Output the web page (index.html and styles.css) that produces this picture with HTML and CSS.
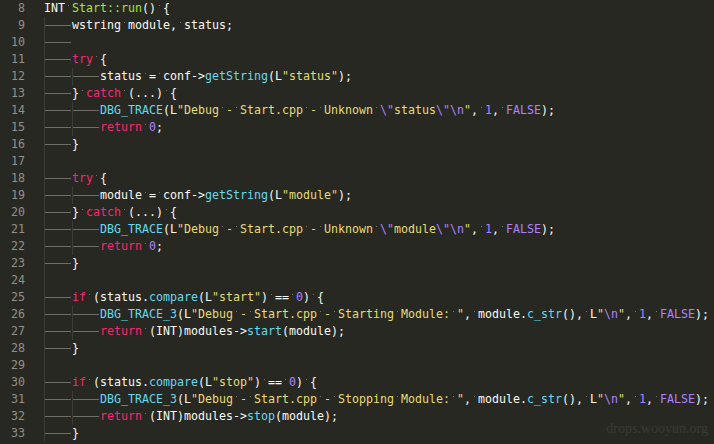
FILE: index.html
```html
<!DOCTYPE html>
<html>
<head>
<meta charset="utf-8">
<link rel="stylesheet" href="styles.css">
</head>
<body>
<div class="editor">
<div class="line"><span class="num">8</span><span class="code">INT<i class="w"> </i><span class="e">Start::run</span>()<i class="w"> </i>{</span></div>
<div class="line"><span class="num">9</span><span class="code"><i class="t"></i>wstring<i class="w"> </i>module,<i class="w"> </i>status;</span></div>
<div class="line"><span class="num">10</span><span class="code"><i class="t"></i></span></div>
<div class="line"><span class="num">11</span><span class="code"><i class="t"></i><span class="k">try</span><i class="w"> </i>{</span></div>
<div class="line"><span class="num">12</span><span class="code"><i class="t"></i><i class="t"></i>status<i class="w"> </i>=<i class="w"> </i>conf-&gt;<span class="f">getString</span>(L<span class="s">"status"</span>);</span></div>
<div class="line"><span class="num">13</span><span class="code"><i class="t"></i>}<i class="w"> </i><span class="k">catch</span><i class="w"> </i>(...)<i class="w"> </i>{</span></div>
<div class="line"><span class="num">14</span><span class="code"><i class="t"></i><i class="t"></i><span class="f">DBG_TRACE</span>(L<span class="s">"Debug<i class="w"> </i>-<i class="w"> </i>Start.cpp<i class="w"> </i>-<i class="w"> </i>Unknown<i class="w"> </i><span class="n">\"</span>status<span class="n">\"\n</span>"</span>,<i class="w"> </i><span class="n">1</span>,<i class="w"> </i><span class="n">FALSE</span>);</span></div>
<div class="line"><span class="num">15</span><span class="code"><i class="t"></i><i class="t"></i><span class="k">return</span><i class="w"> </i><span class="n">0</span>;</span></div>
<div class="line"><span class="num">16</span><span class="code"><i class="t"></i>}</span></div>
<div class="line"><span class="num">17</span><span class="code"><i class="g"></i></span></div>
<div class="line"><span class="num">18</span><span class="code"><i class="t"></i><span class="k">try</span><i class="w"> </i>{</span></div>
<div class="line"><span class="num">19</span><span class="code"><i class="t"></i><i class="t"></i>module<i class="w"> </i>=<i class="w"> </i>conf-&gt;<span class="f">getString</span>(L<span class="s">"module"</span>);</span></div>
<div class="line"><span class="num">20</span><span class="code"><i class="t"></i>}<i class="w"> </i><span class="k">catch</span><i class="w"> </i>(...)<i class="w"> </i>{</span></div>
<div class="line"><span class="num">21</span><span class="code"><i class="t"></i><i class="t"></i><span class="f">DBG_TRACE</span>(L<span class="s">"Debug<i class="w"> </i>-<i class="w"> </i>Start.cpp<i class="w"> </i>-<i class="w"> </i>Unknown<i class="w"> </i><span class="n">\"</span>module<span class="n">\"\n</span>"</span>,<i class="w"> </i><span class="n">1</span>,<i class="w"> </i><span class="n">FALSE</span>);</span></div>
<div class="line"><span class="num">22</span><span class="code"><i class="t"></i><i class="t"></i><span class="k">return</span><i class="w"> </i><span class="n">0</span>;</span></div>
<div class="line"><span class="num">23</span><span class="code"><i class="t"></i>}</span></div>
<div class="line"><span class="num">24</span><span class="code"><i class="g"></i></span></div>
<div class="line"><span class="num">25</span><span class="code"><i class="t"></i><span class="k">if</span><i class="w"> </i>(status.<span class="f">compare</span>(L<span class="s">"start"</span>)<i class="w"> </i>==<i class="w"> </i><span class="n">0</span>)<i class="w"> </i>{</span></div>
<div class="line"><span class="num">26</span><span class="code"><i class="t"></i><i class="t"></i><span class="f">DBG_TRACE_3</span>(L<span class="s">"Debug<i class="w"> </i>-<i class="w"> </i>Start.cpp<i class="w"> </i>-<i class="w"> </i>Starting<i class="w"> </i>Module:<i class="w"> </i>"</span>,<i class="w"> </i>module.<span class="f">c_str</span>(),<i class="w"> </i>L<span class="s">"<span class="n">\n</span>"</span>,<i class="w"> </i><span class="n">1</span>,<i class="w"> </i><span class="n">FALSE</span>);</span></div>
<div class="line"><span class="num">27</span><span class="code"><i class="t"></i><i class="t"></i><span class="k">return</span><i class="w"> </i>(INT)modules-&gt;<span class="f">start</span>(module);</span></div>
<div class="line"><span class="num">28</span><span class="code"><i class="t"></i>}</span></div>
<div class="line"><span class="num">29</span><span class="code"><i class="g"></i></span></div>
<div class="line"><span class="num">30</span><span class="code"><i class="t"></i><span class="k">if</span><i class="w"> </i>(status.<span class="f">compare</span>(L<span class="s">"stop"</span>)<i class="w"> </i>==<i class="w"> </i><span class="n">0</span>)<i class="w"> </i>{</span></div>
<div class="line"><span class="num">31</span><span class="code"><i class="t"></i><i class="t"></i><span class="f">DBG_TRACE_3</span>(L<span class="s">"Debug<i class="w"> </i>-<i class="w"> </i>Start.cpp<i class="w"> </i>-<i class="w"> </i>Stopping<i class="w"> </i>Module:<i class="w"> </i>"</span>,<i class="w"> </i>module.<span class="f">c_str</span>(),<i class="w"> </i>L<span class="s">"<span class="n">\n</span>"</span>,<i class="w"> </i><span class="n">1</span>,<i class="w"> </i><span class="n">FALSE</span>);</span></div>
<div class="line"><span class="num">32</span><span class="code"><i class="t"></i><i class="t"></i><span class="k">return</span><i class="w"> </i>(INT)modules-&gt;<span class="f">stop</span>(module);</span></div>
<div class="line"><span class="num">33</span><span class="code"><i class="t"></i>}</span></div>
</div>
<div class="mark">drops.wooyun.org</div>
</body>
</html>
```

FILE: styles.css
```css
html, body {
  margin: 0;
  height: 100%;
  overflow: hidden;
  background: #272822;
}

.editor {
  font-family: "DejaVu Sans Mono", monospace;
  font-size: 11.63px;
  line-height: 17px;
  color: #f8f8f2;
}

.line {
  display: flex;
  height: 17px;
}

.num {
  flex: none;
  width: 25px;
  text-align: right;
  color: #8f908a;
}

.code {
  margin-left: 19px;
  white-space: pre;
}

.code i {
  font-style: normal;
}

.t {
  display: inline-block;
  width: 28px;
  height: 17px;
  vertical-align: top;
  box-shadow: inset 1px 0 #3e3d35;
  background: linear-gradient(#6e6e66, #6e6e66) no-repeat 1px 8px / 26px 1px;
}

.g {
  display: inline-block;
  width: 1px;
  height: 17px;
  vertical-align: top;
  background: #3e3d35;
}

.w {
  background: linear-gradient(#77776e, #77776e) no-repeat 3px 4px / 1px 1px;
}

.k { color: #f92672; }
.f { color: #66d9ef; }
.s { color: #e6db74; }
.n { color: #ae81ff; }
.e { color: #a6e22e; }

.mark {
  position: absolute;
  right: 6px;
  bottom: 7px;
  font-family: "Liberation Serif", serif;
  font-size: 14px;
  color: #3a3a33;
}
```
